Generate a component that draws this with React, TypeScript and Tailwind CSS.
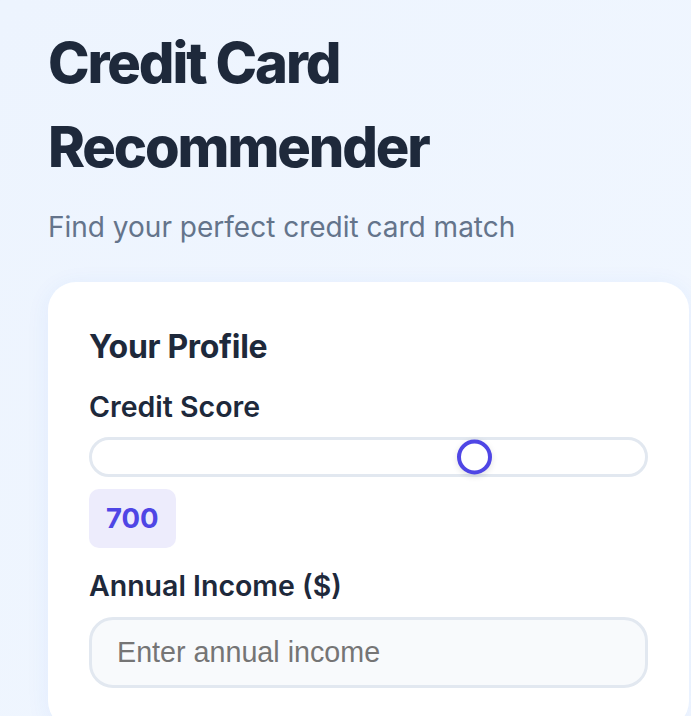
import React from "react";

export default function App() {
  const min = 0;
  const max = 1000;
  const value = 700;
  const pct = (value - min) / (max - min);
  const trackInner = 553; // 559 - 2*3 border
  const thumb = 35;
  const left = pct * (trackInner - thumb) + 2.5;

  return (
    <div
      className="min-h-screen w-full bg-gradient-to-br from-[#edf4fe] to-[#f1f7ff] pl-[48px] pt-[21px] pb-10"
      style={{ fontFamily: "Inter, 'Noto Sans', sans-serif" }}
    >
      <h1 className="text-[56px] leading-[84px] font-extrabold tracking-[-0.038em] text-[#1e293b] w-[560px]">
        Credit Card Recommender
      </h1>
      <p className="mt-[17px] text-[28px] leading-[42px] text-[#64748b]">
        Find your perfect credit card match
      </p>

      <div className="mt-[34px] w-[641px] rounded-[28px] bg-white p-[41px] shadow-[0_4px_24px_rgba(37,99,235,0.07)]">
        <h2 className="text-[32px] leading-[47px] font-bold tracking-[-0.01em] text-[#1e293b]">
          Your Profile
        </h2>

        <div className="mt-[16px] text-[28.5px] leading-[42px] font-semibold text-[#1e293b]">
          Credit Score
        </div>

        <div className="relative mt-[9px] h-[40px] w-full rounded-full border-[3px] border-[#e2e8f0] bg-white">
          <div
            className="absolute top-1/2 h-[35px] w-[35px] -translate-y-1/2 rounded-full border-[4px] border-[#4f46e5] bg-white shadow-[0_2px_6px_rgba(0,0,0,0.12)]"
            style={{ left: `${left}px` }}
          />
        </div>

        <div className="mt-[12px] inline-flex h-[59px] items-center rounded-[10px] bg-[#edecfc] px-[17px] text-[27.5px] font-bold text-[#4f46e5]">
          {value}
        </div>

        <div className="mt-[17px] text-[28.5px] leading-[42px] font-semibold text-[#1e293b]">
          Annual Income ($)
        </div>

        <input
          type="text"
          placeholder="Enter annual income"
          className="mt-[10px] block h-[71px] w-full rounded-[24px] border-[3px] border-[#e2e8f0] bg-[#f8fafc] pl-[25px] text-[28.7px] text-[#1e293b] outline-none placeholder:text-[#757575]"
          style={{ fontFamily: "'Liberation Sans', Arial, sans-serif" }}
        />
      </div>
    </div>
  );
}
